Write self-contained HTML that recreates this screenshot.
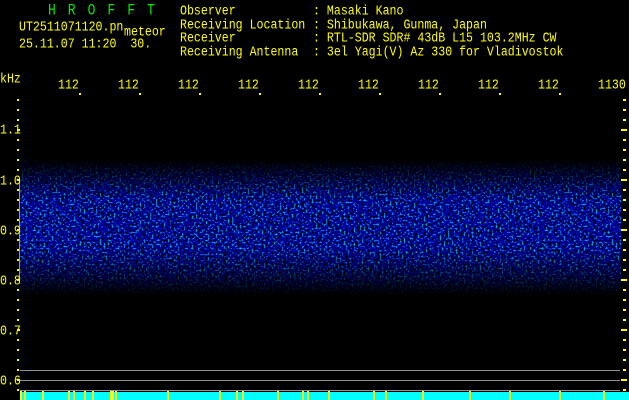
<!DOCTYPE html>
<html><head><meta charset="utf-8"><style>
html,body{margin:0;padding:0;background:#000;}
body{width:629px;height:400px;position:relative;overflow:hidden;font-family:"Liberation Mono",monospace;font-size:11.6px;line-height:11.5px;color:#ffff00;}
.t{position:absolute;white-space:pre;transform:scaleY(1.18);transform-origin:0 0;}
</style></head><body>
<svg width="629" height="400" style="position:absolute;left:0;top:0">
<defs>
<filter id="nz" x="0" y="0" width="100%" height="100%">
<feTurbulence type="fractalNoise" baseFrequency="0.5" numOctaves="1" seed="4"/>
<feColorMatrix type="matrix" values="0 0 0 0 0  3 0 0 0 -1.75  2.6 0 0 0 -0.85  0 0 0 0 1"/>
</filter>
<linearGradient id="mg" x1="0" y1="0" x2="0" y2="1">
<stop offset="0" stop-color="#000"/>
<stop offset="0.12" stop-color="#555"/>
<stop offset="0.3" stop-color="#ddd"/>
<stop offset="0.65" stop-color="#ddd"/>
<stop offset="0.88" stop-color="#555"/>
<stop offset="1" stop-color="#000"/>
</linearGradient>
<mask id="mk"><rect x="20" y="160" width="601" height="135" fill="url(#mg)"/></mask>
</defs>
<g mask="url(#mk)"><rect x="20" y="160" width="601" height="135" filter="url(#nz)"/></g>
<line x1="19.5" y1="180" x2="19.5" y2="281" stroke="#8890c0" stroke-width="1"/>
<line x1="20" y1="370.5" x2="620" y2="370.5" stroke="#909090"/>
<line x1="20" y1="380.5" x2="620" y2="380.5" stroke="#909090"/>
<line x1="20" y1="390.5" x2="620" y2="390.5" stroke="#909090"/>
<rect x="20" y="392" width="609" height="8" fill="#00ffff"/>
</svg>
<div class="t" style="left:48px;top:4px;color:#00ee00;letter-spacing:12px;font-size:13px">HROFFT</div>
<div class="t" style="left:19px;top:21px">UT2511071120.pn</div>
<div class="t" style="left:124px;top:26px">meteor</div>
<div class="t" style="left:19px;top:38px">25.11.07 11:20  30.</div>
<div class="t" style="left:180px;top:5px">Observer
Receiving Location
Receiver
Receiving Antenna</div>
<div class="t" style="left:313px;top:5px">: Masaki Kano
: Shibukawa, Gunma, Japan
: RTL-SDR SDR# 43dB L15 103.2MHz CW
: 3el Yagi(V) Az 330 for Vladivostok</div>
<div class="t" style="left:0px;top:73px">kHz</div>
<div class="t" style="left:58px;top:79px">112</div>
<div class="t" style="left:118px;top:79px">112</div>
<div class="t" style="left:178px;top:79px">112</div>
<div class="t" style="left:238px;top:79px">112</div>
<div class="t" style="left:298px;top:79px">112</div>
<div class="t" style="left:358px;top:79px">112</div>
<div class="t" style="left:418px;top:79px">112</div>
<div class="t" style="left:478px;top:79px">112</div>
<div class="t" style="left:538px;top:79px">112</div>
<div class="t" style="left:598px;top:79px">1130</div>
<div class="t" style="left:0px;top:124px">1.1</div>
<div class="t" style="left:0px;top:175px">1.0</div>
<div class="t" style="left:0px;top:225px">0.9</div>
<div class="t" style="left:0px;top:275px">0.8</div>
<div class="t" style="left:0px;top:325px">0.7</div>
<div class="t" style="left:0px;top:375px">0.6</div>
<svg width="629" height="400" style="position:absolute;left:0;top:0">
<g stroke="#ffff00" stroke-width="2">
<path d="M17 100h2M17 110h2M17 120h2M17 140h2M17 150h2M17 160h2M17 170h2M17 190h2M17 200h2M17 210h2M17 220h2M17 240h2M17 250h2M17 260h2M17 270h2M17 290h2M17 300h2M17 310h2M17 320h2M17 340h2M17 350h2M17 360h2M17 370h2M17 390h2"/>
<path d="M17 130h3M17 180h3M17 230h3M17 280h3M17 330h3M17 380h3"/>
<path d="M623 100h3M623 110h3M623 120h3M623 140h3M623 150h3M623 160h3M623 170h3M623 190h3M623 200h3M623 210h3M623 220h3M623 240h3M623 250h3M623 260h3M623 270h3M623 290h3M623 300h3M623 310h3M623 320h3M623 340h3M623 350h3M623 360h3M623 370h3M623 390h3"/>
<path d="M621 130h6M621 180h6M621 230h6M621 280h6M621 330h6M621 380h6"/>
<path d="M80 93v2M140 93v2M200 93v2M260 93v2M320 93v2M380 93v2M440 93v2M500 93v2M560 93v2"/>
<path d="M21 391v9M25 391v9M43 391v9M69 391v9M74 391v9M85 391v9M93 391v9M111 391v9M113 391v9M116 391v9M168 391v9M220 391v9M237 391v9M243 391v9M278 391v9M303 391v9M308 391v9M329 391v9M374 391v9M386 391v9M423 391v9M470 391v9M510 391v9M560 391v9M604 391v9"/>
</g>
</svg>
</body></html>
